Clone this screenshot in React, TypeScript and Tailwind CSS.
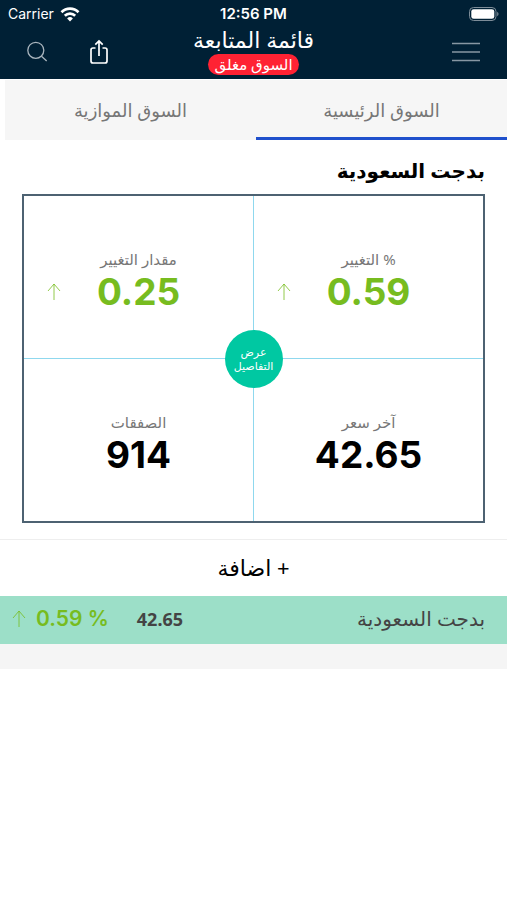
import React from 'react';

interface Stat {
    label: string;
    value: string;
    up?: boolean;
}

const stats: Stat[] = [
    { label: '% التغيير', value: '0.59', up: true },
    { label: 'مقدار التغيير', value: '0.25', up: true },
    { label: 'آخر سعر', value: '42.65' },
    { label: 'الصفقات', value: '914' },
];

function UpArrow() {
    return (
        <svg viewBox="0 0 14 18" className="w-3.5 h-[18px] shrink-0" fill="none" stroke="#77bc1f" strokeWidth="0.8" aria-hidden="true">
            <path d="M7 17V1M1 8l6-7 6 7" />
        </svg>
    );
}

function StatusBar() {
    return (
        <div dir="ltr" className="grid grid-cols-3 items-center h-7 px-2 font-['Inter',sans-serif] text-[14px] leading-5">
            <div className="flex items-center gap-1.5">
                <span>Carrier</span>
                <svg viewBox="0 0 20 15" className="w-5 h-[15px]" fill="none" stroke="white" strokeWidth="2.7" aria-label="Wi-Fi">
                    <path d="M1.5 5.2a12 12 0 0 1 17 0M4.8 8.7a7.4 7.4 0 0 1 10.4 0" />
                    <path d="M10 14.4l-2.9-2.9a4.1 4.1 0 0 1 5.8 0z" fill="white" stroke="none" />
                </svg>
            </div>
            <span className="text-center text-[15px] font-semibold">12:56 PM</span>
            <svg viewBox="0 0 30 14" className="w-[30px] h-3.5 justify-self-end" aria-label="Battery">
                <rect x="0.5" y="0.5" width="26.5" height="13" rx="4" fill="none" stroke="#7d8c98" />
                <rect x="2.3" y="2.2" width="23" height="9.6" rx="2.4" fill="white" />
                <path d="M28.2 4.8c1.8.8 1.8 3.6 0 4.4z" fill="#7d8c98" />
            </svg>
        </div>
    );
}

function Header() {
    return (
        <header className="bg-[#002035] text-white">
            <StatusBar />
            <div dir="ltr" className="grid grid-cols-3 items-center h-[51px] px-[26px] pb-1">
                <div className="flex items-center gap-10">
                    <button type="button" aria-label="بحث">
                        <svg viewBox="0 0 22 22" className="w-[22px] h-[22px]" fill="none" stroke="#a9b5be" strokeWidth="1.3">
                            <circle cx="9.8" cy="9.3" r="8" />
                            <path d="M15.5 15.2l5.2 4.8" />
                        </svg>
                    </button>
                    <button type="button" aria-label="مشاركة">
                        <svg viewBox="0 0 22 26" className="w-[22px] h-[26px]" fill="none" stroke="white" strokeWidth="1.7">
                            <path d="M7.5 9H5a2 2 0 0 0-2 2v11a2 2 0 0 0 2 2h12a2 2 0 0 0 2-2V11a2 2 0 0 0-2-2h-2.5M11 17V2M7.3 5.7L11 2l3.7 3.7" />
                        </svg>
                    </button>
                </div>
                <div dir="rtl" className="flex flex-col items-center gap-1">
                    <h1 className="text-[22px] leading-[22px] whitespace-nowrap">قائمة المتابعة</h1>
                    <span className="rounded-full bg-[#ff2233] px-1.5 text-[15px] leading-[21px] whitespace-nowrap">السوق مغلق</span>
                </div>
                <button type="button" aria-label="القائمة" className="justify-self-end">
                    <svg viewBox="0 0 30 20" className="w-[30px] h-5" stroke="#8797a3" strokeWidth="1.3">
                        <path d="M1 1.5h28M1 10h28M1 18.5h28" />
                    </svg>
                </button>
            </div>
        </header>
    );
}

function StatCell({ label, value, up }: Stat) {
    return (
        <div className="flex flex-col items-center justify-center pt-2.5">
            <span className="text-[15px] leading-5 text-[#777777]">{label}</span>
            <div dir="ltr" className="grid grid-cols-[60px_1fr_60px] items-center justify-items-center w-full">
                <span>{up && <UpArrow />}</span>
                <span className={`font-['Inter',sans-serif] text-[37px] leading-[46px] font-bold ${up ? 'text-[#77bc1f]' : 'text-black'}`}>
                    {value}
                </span>
            </div>
        </div>
    );
}

export default function App() {
    return (
        <div dir="rtl" className="min-h-screen bg-white font-['Noto_Sans','DejaVu_Sans',sans-serif]">
            <Header />

            {/* Tabs */}
            <nav className="grid grid-cols-2 ml-[5px] pt-px text-[18px] text-[#777777]">
                <button type="button" className="h-[60px] bg-[#f6f6f6] border-b-3 border-[#1f50cc] pt-1">السوق الرئيسية</button>
                <button type="button" className="h-[60px] bg-[#f6f6f6]">السوق الموازية</button>
            </nav>

            <main>
                <section className="px-[22px] pb-4">
                    <h2 className="pt-5 pb-3 text-[20px] leading-[22px] font-bold text-black">بدجت السعودية</h2>
                    <div className="relative grid grid-cols-2 auto-rows-[162px] gap-px border-2 border-[#4d6272] bg-[#8fd8ee]">
                        {stats.map((stat) => (
                            <div key={stat.label} className="grid bg-white">
                                <StatCell {...stat} />
                            </div>
                        ))}
                        <button
                            type="button"
                            className="absolute top-1/2 left-1/2 -translate-x-1/2 -translate-y-1/2 flex flex-col items-center justify-center size-[58px] rounded-full bg-[#00c8a2] text-white text-[11px] leading-[14px]"
                        >
                            <span>عرض</span>
                            <span>التفاصيل</span>
                        </button>
                    </div>
                </section>

                <button type="button" className="block w-full h-[57px] pb-0.5 border-t border-[#eeeeee] text-[22px] text-black">
                    + اضافة
                </button>

                <ul className="pb-[25px] bg-[#f5f5f5]">
                    <li className="flex items-center justify-between h-12 pl-3 pr-[22px] bg-[#9cdfc8] text-[#444444]">
                        <span className="pb-0.5 text-[20px]">بدجت السعودية</span>
                        <div dir="ltr" className="flex items-center pb-0.5">
                            <UpArrow />
                            <span className="ml-2.5 font-['Inter',sans-serif] text-[21px] font-semibold text-[#77bc1f]">0.59 %</span>
                            <span className="ml-7 text-[18px] font-bold">42.65</span>
                        </div>
                    </li>
                </ul>
            </main>
        </div>
    );
}
